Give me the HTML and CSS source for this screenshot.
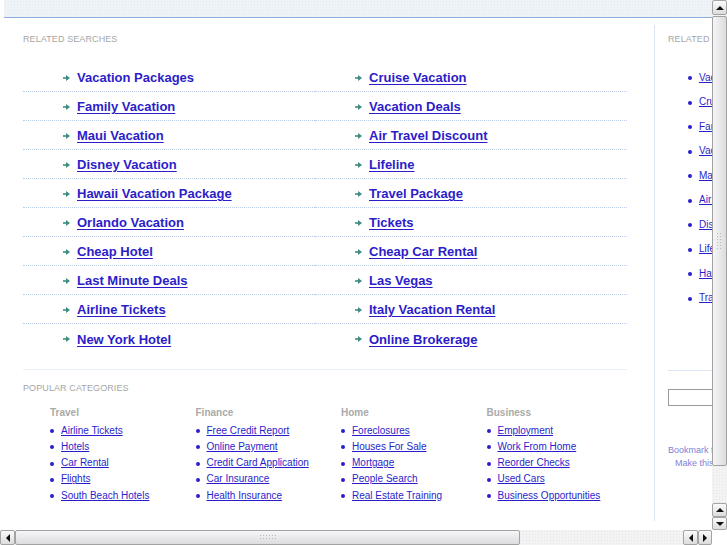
FILE: index.html
```html
<!DOCTYPE html>
<html>
<head>
<meta charset="utf-8">
<link rel="stylesheet" href="styles.css">
</head>
<body>
<div class="screen">
  <div class="viewport">
    <div class="page">
      <div class="banner"></div>
      <div class="body">
        <div class="main">
          <div class="label">RELATED SEARCHES</div>
          <div class="links">
            <div class="row"><svg class="arr" viewBox="0 0 7 6"><rect x="0" y="2.2" width="4" height="1.6"/><polygon points="3,0 7,3 3,6"/></svg><a class="plain">Vacation Packages</a></div>
            <div class="row"><svg class="arr" viewBox="0 0 7 6"><rect x="0" y="2.2" width="4" height="1.6"/><polygon points="3,0 7,3 3,6"/></svg><a>Cruise Vacation</a></div>
            <div class="row"><svg class="arr" viewBox="0 0 7 6"><rect x="0" y="2.2" width="4" height="1.6"/><polygon points="3,0 7,3 3,6"/></svg><a>Family Vacation</a></div>
            <div class="row"><svg class="arr" viewBox="0 0 7 6"><rect x="0" y="2.2" width="4" height="1.6"/><polygon points="3,0 7,3 3,6"/></svg><a>Vacation Deals</a></div>
            <div class="row"><svg class="arr" viewBox="0 0 7 6"><rect x="0" y="2.2" width="4" height="1.6"/><polygon points="3,0 7,3 3,6"/></svg><a>Maui Vacation</a></div>
            <div class="row"><svg class="arr" viewBox="0 0 7 6"><rect x="0" y="2.2" width="4" height="1.6"/><polygon points="3,0 7,3 3,6"/></svg><a>Air Travel Discount</a></div>
            <div class="row"><svg class="arr" viewBox="0 0 7 6"><rect x="0" y="2.2" width="4" height="1.6"/><polygon points="3,0 7,3 3,6"/></svg><a>Disney Vacation</a></div>
            <div class="row"><svg class="arr" viewBox="0 0 7 6"><rect x="0" y="2.2" width="4" height="1.6"/><polygon points="3,0 7,3 3,6"/></svg><a>Lifeline</a></div>
            <div class="row"><svg class="arr" viewBox="0 0 7 6"><rect x="0" y="2.2" width="4" height="1.6"/><polygon points="3,0 7,3 3,6"/></svg><a>Hawaii Vacation Package</a></div>
            <div class="row"><svg class="arr" viewBox="0 0 7 6"><rect x="0" y="2.2" width="4" height="1.6"/><polygon points="3,0 7,3 3,6"/></svg><a>Travel Package</a></div>
            <div class="row"><svg class="arr" viewBox="0 0 7 6"><rect x="0" y="2.2" width="4" height="1.6"/><polygon points="3,0 7,3 3,6"/></svg><a>Orlando Vacation</a></div>
            <div class="row"><svg class="arr" viewBox="0 0 7 6"><rect x="0" y="2.2" width="4" height="1.6"/><polygon points="3,0 7,3 3,6"/></svg><a>Tickets</a></div>
            <div class="row"><svg class="arr" viewBox="0 0 7 6"><rect x="0" y="2.2" width="4" height="1.6"/><polygon points="3,0 7,3 3,6"/></svg><a>Cheap Hotel</a></div>
            <div class="row"><svg class="arr" viewBox="0 0 7 6"><rect x="0" y="2.2" width="4" height="1.6"/><polygon points="3,0 7,3 3,6"/></svg><a>Cheap Car Rental</a></div>
            <div class="row"><svg class="arr" viewBox="0 0 7 6"><rect x="0" y="2.2" width="4" height="1.6"/><polygon points="3,0 7,3 3,6"/></svg><a>Last Minute Deals</a></div>
            <div class="row"><svg class="arr" viewBox="0 0 7 6"><rect x="0" y="2.2" width="4" height="1.6"/><polygon points="3,0 7,3 3,6"/></svg><a>Las Vegas</a></div>
            <div class="row"><svg class="arr" viewBox="0 0 7 6"><rect x="0" y="2.2" width="4" height="1.6"/><polygon points="3,0 7,3 3,6"/></svg><a>Airline Tickets</a></div>
            <div class="row"><svg class="arr" viewBox="0 0 7 6"><rect x="0" y="2.2" width="4" height="1.6"/><polygon points="3,0 7,3 3,6"/></svg><a>Italy Vacation Rental</a></div>
            <div class="row last"><svg class="arr" viewBox="0 0 7 6"><rect x="0" y="2.2" width="4" height="1.6"/><polygon points="3,0 7,3 3,6"/></svg><a>New York Hotel</a></div>
            <div class="row last"><svg class="arr" viewBox="0 0 7 6"><rect x="0" y="2.2" width="4" height="1.6"/><polygon points="3,0 7,3 3,6"/></svg><a>Online Brokerage</a></div>
          </div>
          <div class="rule"></div>
          <div class="label label2">POPULAR CATEGORIES</div>
          <div class="cats">
            <div class="cat">
              <div class="cat-h">Travel</div>
              <ul>
                <li><a>Airline Tickets</a></li>
                <li><a>Hotels</a></li>
                <li><a>Car Rental</a></li>
                <li><a>Flights</a></li>
                <li><a>South Beach Hotels</a></li>
              </ul>
            </div>
            <div class="cat">
              <div class="cat-h">Finance</div>
              <ul>
                <li><a>Free Credit Report</a></li>
                <li><a>Online Payment</a></li>
                <li><a>Credit Card Application</a></li>
                <li><a>Car Insurance</a></li>
                <li><a>Health Insurance</a></li>
              </ul>
            </div>
            <div class="cat">
              <div class="cat-h">Home</div>
              <ul>
                <li><a>Foreclosures</a></li>
                <li><a>Houses For Sale</a></li>
                <li><a>Mortgage</a></li>
                <li><a>People Search</a></li>
                <li><a>Real Estate Training</a></li>
              </ul>
            </div>
            <div class="cat">
              <div class="cat-h">Business</div>
              <ul>
                <li><a>Employment</a></li>
                <li><a>Work From Home</a></li>
                <li><a>Reorder Checks</a></li>
                <li><a>Used Cars</a></li>
                <li><a>Business Opportunities</a></li>
              </ul>
            </div>
          </div>
        </div>
        <div class="side">
          <div class="label">RELATED SEARCHES</div>
          <ul class="side-list">
            <li><a>Vacation Packages</a></li>
            <li><a>Cruise Vacation</a></li>
            <li><a>Family Vacation</a></li>
            <li><a>Vacation Deals</a></li>
            <li><a>Maui Vacation</a></li>
            <li><a>Air Travel Discount</a></li>
            <li><a>Disney Vacation</a></li>
            <li><a>Lifeline</a></li>
            <li><a>Hawaii Vacation Package</a></li>
            <li><a>Travel Package</a></li>
          </ul>
          <div class="side-rule"></div>
          <div class="search-box"></div>
          <div class="bm">Bookmark this page</div>
          <div class="bm bm2">Make this your homepage</div>
        </div>
      </div>
    </div>
  </div>
  <div class="vs">
    <div class="sbtn"><span class="tri up"></span></div>
    <div class="vthumb"><span class="grip vgrip"></span></div>
    <div class="track"></div>
    <div class="sbtn sbtn-b"><span class="tri up"></span></div>
    <div class="sbtn sbtn-c"><span class="tri down"></span></div>
  </div>
  <div class="hs">
    <div class="sbtn hbtn"><span class="tri left"></span></div>
    <div class="hthumb"><span class="grip hgrip"></span></div>
    <div class="track"></div>
    <div class="sbtn hbtn"><span class="tri left"></span></div>
    <div class="sbtn hbtn hbtn-r"><span class="tri right"></span></div>
  </div>
  <div class="corner"></div>
</div>
</body>
</html>
```
FILE: styles.css
```css
* { box-sizing: border-box; }
html, body { margin: 0; padding: 0; background: #fff; }
body { font-family: "Liberation Sans", Arial, sans-serif; overflow: hidden; }

.screen {
  width: 727px; height: 545px;
  display: grid;
  grid-template-columns: 712px 15px;
  grid-template-rows: 530px 15px;
}
.viewport { overflow: hidden; position: relative; }
.page { width: 820px; padding-left: 4px; }
.banner {
  height: 18px;
  background-color: #eef3f8;
  background-image: radial-gradient(#e3eaf2 0.6px, transparent 0.8px);
  background-size: 3px 3px;
  border-bottom: 1px solid #8eaede;
}
.body { display: flex; }

.main {
  width: 651px;
  height: 496px;
  margin-top: 7px;
  padding-left: 19px;
  border-right: 1px solid #dde5f3;
}
.label {
  margin-top: 8px;
  font-size: 9px;
  line-height: 12px;
  color: #a6a6a6;
  letter-spacing: 0.1px;
  white-space: nowrap;
}
.links {
  width: 604px;
  margin-top: 18px;
  display: grid;
  grid-template-columns: 292px 312px;
}
.row {
  height: 29px;
  display: flex;
  align-items: center;
  padding-left: 40px;
  border-bottom: 1px dotted #b9cde8;
  padding-top: 1px;
}
.row.last { border-bottom: none; }
.arr { width: 7px; height: 6px; fill: #3f8c80; margin-right: 7px; flex: none; }
.row a {
  font-size: 13px;
  font-weight: bold;
  color: #2c1dc9;
  text-decoration: underline;
  text-underline-offset: 2px;
  letter-spacing: 0;
}
.row a.plain { text-decoration: none; }
.rule { width: 604px; height: 1px; background: #eaf0f8; margin-top: 16px; }
.label2 { margin-top: 12px; }

.cats {
  display: grid;
  grid-template-columns: 145.5px 145.5px 145.5px 145.5px;
  padding-left: 27px;
  margin-top: 13px;
}
.cat-h {
  font-size: 10px;
  font-weight: bold;
  color: #aaaaaa;
  line-height: 12px;
}
.cat ul { list-style: none; margin: 3px 0 0; padding: 0; }
.cat li {
  display: flex; align-items: center;
  height: 16.25px;
  font-size: 10px;
}
.cat li::before, .side-list li::before {
  content: "";
  width: 4px; height: 4px; border-radius: 2px;
  background: #2a1ecb;
  margin-right: 7px;
  flex: none;
  margin-top: 2px;
}
.cat a, .side-list a {
  color: #2a1ecb;
  text-decoration: underline;
  letter-spacing: 0;
}

.side { width: 160px; padding-left: 13px; padding-top: 7px; }
.side-list { list-style: none; margin: 20px 0 0; padding: 0 0 0 20px; }
.side-list li {
  display: flex; align-items: center;
  height: 24.5px;
  font-size: 10px;
  white-space: nowrap;
}
.side-rule { width: 120px; height: 1px; background: #dce5f5; margin-top: 60px; }
.search-box {
  width: 140px; height: 17px;
  border: 1px solid #9a9a9a;
  margin-top: 18px;
}
.bm {
  margin-top: 38px;
  font-size: 9px;
  line-height: 13px;
  color: #7f7fd6;
  white-space: nowrap;
}
.bm2 { margin-top: 0; padding-left: 7px; }

/* scrollbars */
.vs {
  display: flex; flex-direction: column;
  background: #f3f3f3;
  background-image: radial-gradient(#e6e6e6 0.6px, transparent 0.8px);
  background-size: 3px 3px;
}
.hs {
  display: flex;
  background: #f3f3f3;
  background-image: radial-gradient(#e6e6e6 0.6px, transparent 0.8px);
  background-size: 3px 3px;
}
.corner { background: #fff; }
.track { flex: 1; }
.sbtn {
  height: 15px; flex: none;
  border: 1px solid #a4a4a4;
  border-radius: 2px;
  background: linear-gradient(#fbfbfb, #dcdcdc);
  display: flex; align-items: center; justify-content: center;
}
.sbtn-b { height: 14px; }
.sbtn-c { height: 13px; }
.hbtn { width: 15px; height: 15px; }
.hbtn-r { width: 14px; }
.vthumb {
  height: 450px; flex: none;
  margin-top: 1px;
  border: 1px solid #a2a2a2;
  border-radius: 2px;
  background: linear-gradient(90deg, #f6f6f8, #dcdce0);
  display: flex; align-items: center; justify-content: center;
}
.hthumb {
  width: 505px; flex: none;
  border: 1px solid #a2a2a2;
  border-radius: 2px;
  background: linear-gradient(#f6f6f8, #dcdce0);
  display: flex; align-items: center; justify-content: center;
}
.grip {
  background-image: radial-gradient(#b8b8b8 0.7px, transparent 0.9px);
  background-size: 3px 3px;
}
.vgrip { width: 7px; height: 18px; }
.hgrip { width: 17px; height: 7px; }
.tri { width: 0; height: 0; border-style: solid; }
.tri.up { border-width: 0 4px 4px 4px; border-color: transparent transparent #111 transparent; }
.tri.down { border-width: 4px 4px 0 4px; border-color: #111 transparent transparent transparent; }
.tri.left { border-width: 4px 4px 4px 0; border-color: transparent #111 transparent transparent; }
.tri.right { border-width: 4px 0 4px 4px; border-color: transparent transparent transparent #111; }
```
